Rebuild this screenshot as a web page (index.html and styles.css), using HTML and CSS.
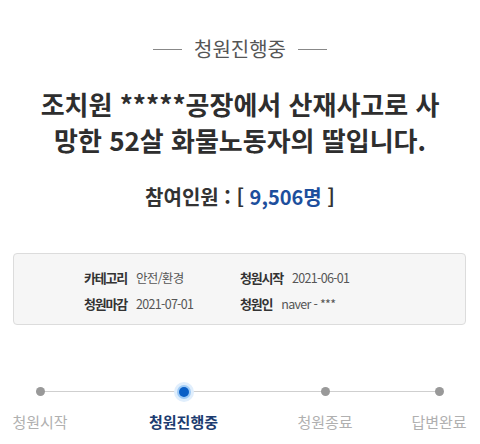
FILE: index.html
```html
<!DOCTYPE html>
<html lang="ko">
<head>
<meta charset="utf-8">
<link rel="stylesheet" href="styles.css">
</head>
<body>
<div class="page">
  <div class="status"><span class="dash"></span><span class="status-text">청원진행중</span><span class="dash"></span></div>
  <h1 class="title">조치원 *****공장에서 산재사고로 사<br>망한 52살 화물노동자의 딸입니다.</h1>
  <div class="count">참여인원 : [ <span class="num">9,506명</span> ]</div>
  <div class="info">
    <div class="cell"><span class="label">카테고리</span><span class="value">안전/환경</span></div>
    <div class="cell"><span class="label">청원시작</span><span class="value">2021-06-01</span></div>
    <div class="cell"><span class="label">청원마감</span><span class="value">2021-07-01</span></div>
    <div class="cell"><span class="label">청원인</span><span class="value">naver - ***</span></div>
  </div>
  <div class="timeline">
    <div class="step s1"><span class="dot"></span><span class="step-label">청원시작</span></div>
    <div class="step s2 active"><span class="dot"></span><span class="step-label">청원진행중</span></div>
    <div class="step s3"><span class="dot"></span><span class="step-label">청원종료</span></div>
    <div class="step s4"><span class="dot"></span><span class="step-label">답변완료</span></div>
  </div>
</div>
</body>
</html>
```

FILE: styles.css
```css
* { box-sizing: border-box; }
html, body { margin: 0; padding: 0; background: #fff; }
body {
  font-family: "Noto Sans CJK KR", "Noto Sans", sans-serif;
  color: #333;
  width: 480px;
  height: 444px;
  overflow: hidden;
}
.page { padding-top: 38px; }

.status {
  display: flex;
  justify-content: center;
  align-items: center;
  gap: 12px;
  height: 22px;
}
.dash { display: block; width: 29px; height: 1px; background: #888; }
.status-text { font-size: 20px; line-height: 22px; color: #555; }

.title {
  margin: 26px 0 0;
  font-size: 26px;
  line-height: 36px;
  font-weight: 700;
  color: #2e2e2e;
  text-align: center;
}

.count {
  margin-top: 25px;
  font-size: 20px;
  line-height: 28px;
  font-weight: 700;
  text-align: center;
  color: #333;
}
.num { color: #1d4f9d; }

.info {
  margin: 42px 14px 0 13px;
  height: 72px;
  background: #f6f6f6;
  border: 1px solid #dcdcdc;
  border-radius: 4px;
  padding: 10px 0 8px 70px;
  display: grid;
  grid-template-columns: 156px 1fr;
  grid-auto-rows: 26px;
}
.cell { display: flex; align-items: center; }
.label {
  font-size: 13px;
  font-weight: 700;
  letter-spacing: -1.2px;
  color: #333;
  margin-right: 9px;
}
.value {
  font-size: 12.5px;
  letter-spacing: -0.7px;
  color: #555;
}

.timeline {
  position: relative;
  display: flex;
  margin-top: 62px;
  padding-left: 13px;
}
.timeline::before {
  content: "";
  position: absolute;
  left: 40px;
  width: 399px;
  top: 4px;
  height: 1px;
  background: #cfcfcf;
}
.step {
  position: relative;
  display: flex;
  flex-direction: column;
  align-items: center;
}
.s1 { width: 54px; }
.s2 { width: 67px; margin-left: 83px; }
.s3 { width: 54px; margin-left: 81px; }
.s4 { width: 54px; margin-left: 60px; }
.dot {
  display: block;
  width: 9px;
  height: 9px;
  border-radius: 50%;
  background: #999;
}
.active .dot {
  width: 10px;
  height: 10px;
  margin-top: -0.5px;
  background: #0a5fc6;
  box-shadow: 0 0 0 2px #9fcbf6, 0 0 0 5px #e0eefc;
}
.step-label {
  margin-top: 16px;
  font-size: 15px;
  line-height: 20px;
  color: #b0b0b0;
  white-space: nowrap;
}
.active .step-label { color: #1c3c70; font-weight: 700; margin-top: 15.5px; }
```
